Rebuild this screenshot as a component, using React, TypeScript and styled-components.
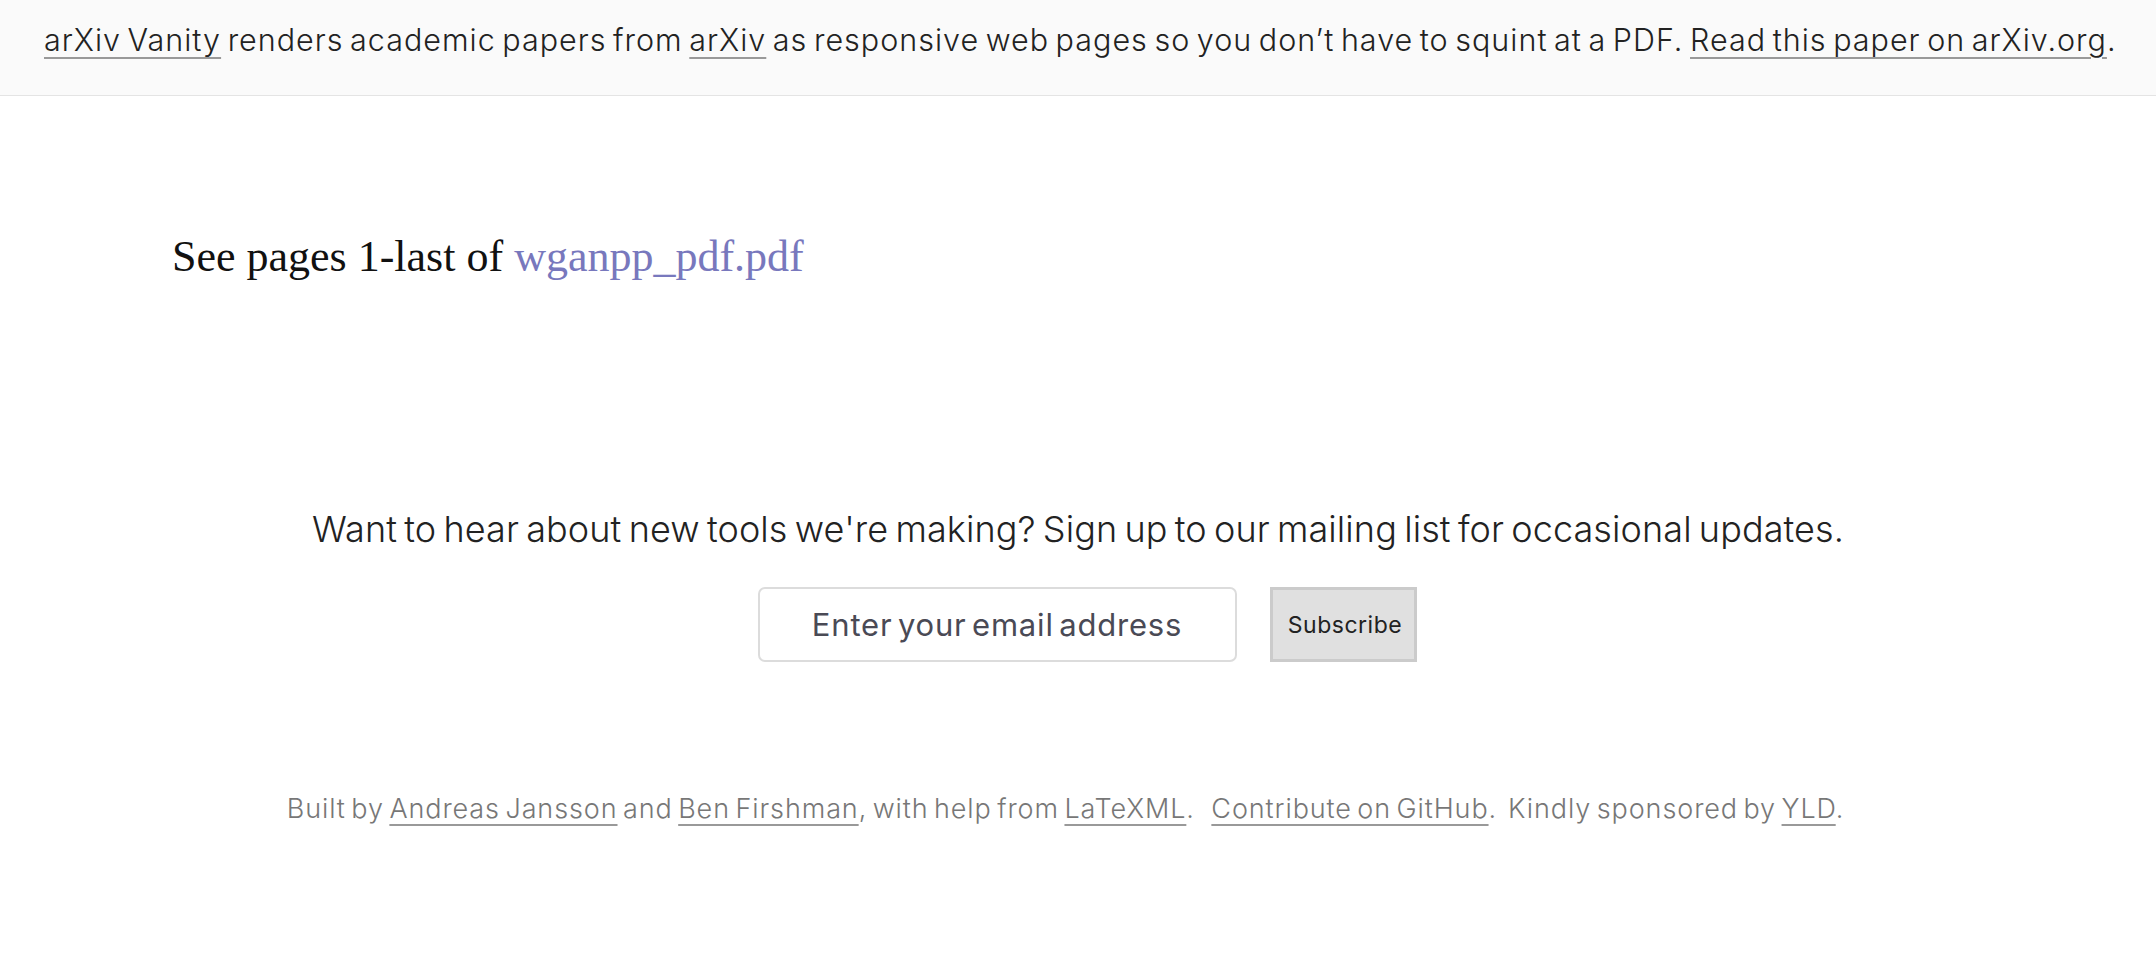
import React from "react";
import styled, { createGlobalStyle } from "styled-components";

const Global = createGlobalStyle`
  html, body { margin: 0; padding: 0; background: #ffffff; }
  body { font-family: Inter, "Noto Sans", sans-serif; color: #222; }
`;

const Page = styled.div`
  display: flex;
  flex-direction: column;
  width: 100%;
`;

const Header = styled.header`
  box-sizing: border-box;
  height: 96px;
  padding: 20px 44px 0;
  background: #fafafa;
  border-bottom: 1px solid #e4e4e4;
  font-size: 30.5px;
  font-weight: 300;
  line-height: 40px;
  letter-spacing: 1px;
  word-spacing: -3px;
  color: #222;
  white-space: nowrap;
`;

const ULink = styled.a`
  color: inherit;
  text-decoration: underline;
  text-decoration-color: #999;
  text-decoration-thickness: 2px;
  text-underline-offset: 6px;
`;

const Article = styled.main`
  padding: 137px 172px 0;
`;

const SerifPara = styled.p`
  margin: 0;
  font-family: "Liberation Serif", "Times New Roman", serif;
  font-size: 44px;
  line-height: 48px;
  color: #111;
`;

const SerifLink = styled.a`
  color: #7878bd;
  text-decoration: none;
`;

const Signup = styled.section`
  margin-top: 226px;
  display: flex;
  flex-direction: column;
  align-items: center;
`;

const SignupText = styled.p`
  margin: 0;
  font-size: 36px;
  font-weight: 300;
  line-height: 44px;
  letter-spacing: 0.1px;
  word-spacing: -3px;
  color: #222;
`;

const Form = styled.form`
  margin-top: 36px;
  margin-left: 18px;
  display: flex;
  align-items: stretch;
  gap: 33px;
  height: 75px;
`;

const EmailInput = styled.input`
  box-sizing: border-box;
  width: 479px;
  height: 75px;
  border: 2px solid #dcdcdc;
  border-radius: 7px;
  background: #fff;
  text-align: center;
  font-family: Inter, "Noto Sans", sans-serif;
  font-size: 31px;
  letter-spacing: 0.8px;
  word-spacing: -4px;
  color: #4a4a55;
  outline: none;
  &::placeholder { color: #4a4a55; opacity: 1; }
`;

const SubscribeButton = styled.button`
  box-sizing: border-box;
  width: 147px;
  height: 75px;
  background: #e0e0e0;
  border: 3px solid #cbcbcb;
  border-radius: 0;
  font-family: Inter, "Noto Sans", sans-serif;
  font-size: 23px;
  letter-spacing: 0.5px;
  color: #222;
  padding: 0 0 0 4px;
`;

const Footer = styled.footer`
  margin-top: 129px;
  padding-right: 25px;
  display: flex;
  justify-content: center;
  font-size: 27px;
  font-weight: 300;
  line-height: 36px;
  letter-spacing: 0.9px;
  word-spacing: -3px;
  color: #777;
  white-space: pre;
`;

export default function App() {
  return (
    <Page>
      <Global />
      <Header>
        <ULink href="#">arXiv Vanity</ULink> renders academic papers from{" "}
        <ULink href="#">arXiv</ULink> as responsive web pages so you don’t have to squint at a PDF.{"  "}
        <ULink href="#">Read this paper on arXiv.org</ULink>.
      </Header>
      <Article>
        <SerifPara>
          See pages 1-last of <SerifLink href="#">wganpp_pdf.pdf</SerifLink>
        </SerifPara>
      </Article>
      <Signup>
        <SignupText>
          Want to hear about new tools we're making? Sign up to our mailing list for occasional updates.
        </SignupText>
        <Form onSubmit={(e) => e.preventDefault()}>
          <EmailInput type="email" placeholder="Enter your email address" />
          <SubscribeButton type="submit">Subscribe</SubscribeButton>
        </Form>
      </Signup>
      <Footer>
        <span>
          Built by <ULink href="#">Andreas Jansson</ULink> and <ULink href="#">Ben Firshman</ULink>, with help from{" "}
          <ULink href="#">LaTeXML</ULink>.{"   "}<ULink href="#">Contribute on GitHub</ULink>.{"  "}Kindly sponsored by{" "}
          <ULink href="#">YLD</ULink>.
        </span>
      </Footer>
    </Page>
  );
}
